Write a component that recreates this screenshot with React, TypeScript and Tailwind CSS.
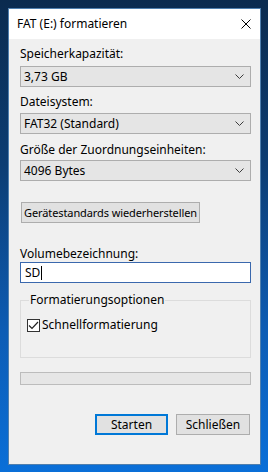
import React from "react";

const Chevron = () => (
  <svg width="9" height="5" viewBox="0 0 9 5" className="shrink-0">
    <path d="M0.5 0.5 L4.5 4.5 L8.5 0.5" fill="none" stroke="#3c3c3c" strokeWidth="1" />
  </svg>
);

const Combo = ({ value }: { value: string }) => (
  <div className="flex h-[21px] w-[231px] items-center justify-between border border-[#adadad] bg-[#e5e5e5] pl-[3px] pr-[6px]">
    <span className="text-[12px] leading-[16px] text-black">{value}</span>
    <Chevron />
  </div>
);

const Label = ({ children, className = "" }: { children: React.ReactNode; className?: string }) => (
  <div className={`text-[12px] leading-[16px] text-black ${className}`}>{children}</div>
);

export default function App() {
  return (
    <div className="h-[472px] w-[268px] overflow-hidden bg-[linear-gradient(180deg,#0b2b4f_0%,#0c3d73_35%,#0d5cb4_70%,#0a6fd8_100%)] pl-[8px] pt-[8px] font-['Noto_Sans',sans-serif]">
      <div className="flex h-[457px] w-[253px] flex-col border border-[#4f7fae] bg-[#f0f0f0]">
        {/* Title bar */}
        <div className="flex h-[30px] items-center justify-between bg-white pl-[8px] pr-[9px]">
          <span className="text-[12px] leading-[16px] text-black">FAT (E:) formatieren</span>
          <svg width="10" height="10" viewBox="0 0 10 10">
            <path d="M0.5 0.5 L9.5 9.5 M9.5 0.5 L0.5 9.5" stroke="#000" strokeWidth="1" />
          </svg>
        </div>

        {/* Body */}
        <div className="flex flex-1 flex-col pl-[11px] pt-[7px]">
          <Label>Speicherkapazität:</Label>
          <div className="mt-[4px]">
            <Combo value="3,73 GB" />
          </div>

          <Label className="mt-[7px]">Dateisystem:</Label>
          <div className="mt-[3px]">
            <Combo value="FAT32 (Standard)" />
          </div>

          <Label className="mt-[8px]">Größe der Zuordnungseinheiten:</Label>
          <div className="mt-[2px]">
            <Combo value="4096 Bytes" />
          </div>

          <button className="ml-[1px] mt-[21px] flex h-[21px] w-[179px] items-center justify-center whitespace-nowrap border border-[#adadad] bg-[#e1e1e1] text-[11px] leading-[16px] tracking-[-0.1px] text-black">
            Gerätestandards wiederherstellen
          </button>

          <Label className="mt-[23px]">Volumebezeichnung:</Label>
          <div className="flex h-[21px] w-[231px] items-center border border-[#3a68ad] bg-white pl-[4px]">
            <span className="text-[12px] leading-[16px] text-black">SD</span>
            <span className="ml-[1px] h-[14px] w-[1px] bg-black" />
          </div>

          {/* Group box */}
          <div className="relative mt-[17px] h-[58px] w-[231px] border border-[#dcdcdc]">
            <span className="absolute left-[8px] top-[-9px] bg-[#f0f0f0] px-[1px] text-[12px] leading-[16px] text-black">
              Formatierungsoptionen
            </span>
            <div className="ml-[6px] mt-[16px] flex items-center gap-[2px]">
              <div className="flex h-[13px] w-[13px] items-center justify-center border border-[#333333] bg-white">
                <svg width="11" height="9" viewBox="0 0 11 9">
                  <path d="M1 4.5 L4 7.5 L10 1" fill="none" stroke="#222" strokeWidth="1.2" />
                </svg>
              </div>
              <span className="text-[12px] leading-[16px] text-black">Schnellformatierung</span>
            </div>
          </div>

          {/* Progress bar */}
          <div className="mt-[14px] h-[13px] w-[231px] border border-[#bcbcbc] bg-[#e6e6e6]" />

          <div className="mt-[29px] flex w-[231px] justify-end gap-[8px] pr-[1px]">
            <button className="flex h-[21px] w-[73px] items-center justify-center border-2 border-[#0078d7] bg-[#e1e1e1] text-[12px] leading-[16px] text-black">
              Starten
            </button>
            <button className="flex h-[21px] w-[74px] items-center justify-center border border-[#adadad] bg-[#e1e1e1] text-[12px] leading-[16px] text-black">
              Schließen
            </button>
          </div>
        </div>
      </div>
    </div>
  );
}
